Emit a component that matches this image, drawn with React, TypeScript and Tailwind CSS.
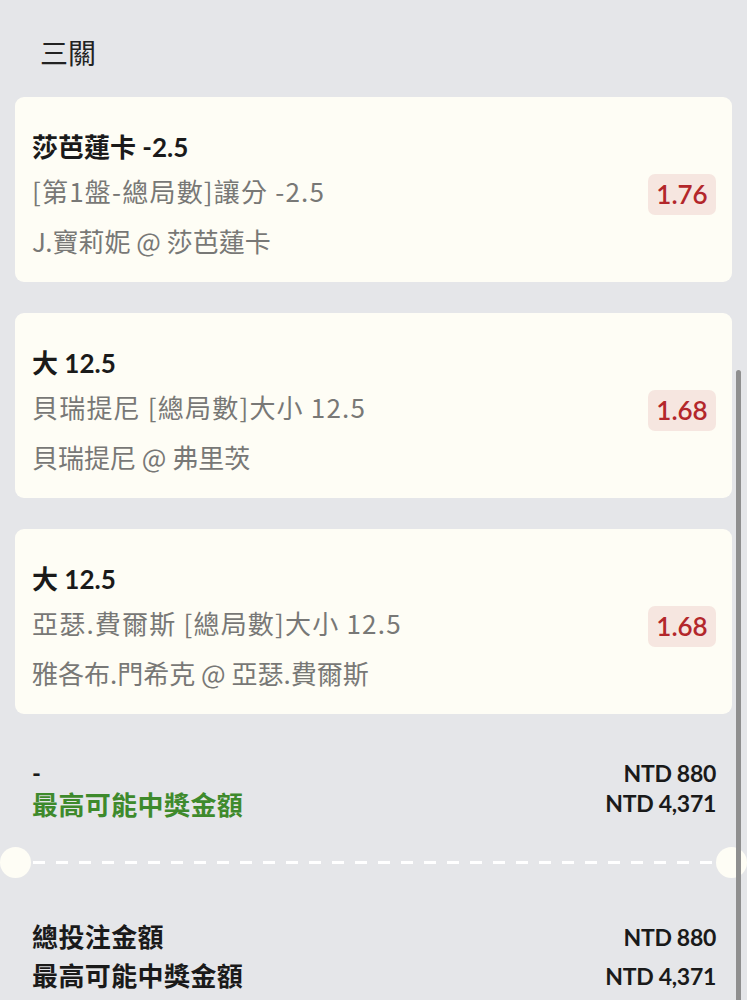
import React from 'react';

type Leg = {
  pick: string;
  market: string;
  match: string;
  odds: string;
};

const legs: Leg[] = [
  { pick: '莎芭蓮卡 -2.5', market: '[第1盤-總局數]讓分 -2.5', match: 'J.寶莉妮 @ 莎芭蓮卡', odds: '1.76' },
  { pick: '大 12.5', market: '貝瑞提尼 [總局數]大小 12.5', match: '貝瑞提尼 @ 弗里茨', odds: '1.68' },
  { pick: '大 12.5', market: '亞瑟.費爾斯 [總局數]大小 12.5', match: '雅各布.門希克 @ 亞瑟.費爾斯', odds: '1.68' },
];

const cjk = { fontFamily: '"Noto Sans CJK TC", sans-serif' };

const LegCard: React.FC<{ leg: Leg }> = ({ leg }) => (
  <div className="flex items-center justify-between rounded-[9px] bg-[#fefdf5] pl-[17px] pr-[16px] pt-[34px] pb-[25px]">
    <div>
      <div className="text-[26px] leading-[32px] font-bold text-[#1a1a1a]">{leg.pick}</div>
      <div className="mt-[12px] text-[26px] leading-[32px] tracking-[1.2px] text-[#787876]" style={cjk}>
        {leg.market}
      </div>
      <div className="mt-[18px] text-[26px] leading-[32px] text-[#787876]" style={cjk}>
        {leg.match}
      </div>
    </div>
    <div className="flex h-[41px] w-[68px] items-center justify-center rounded-[7px] bg-[#f6e6e0] text-[26px] font-semibold text-[#b3272b]">
      {leg.odds}
    </div>
  </div>
);

const App: React.FC = () => {
  return (
    <div
      className="relative h-[1000px] w-[747px] overflow-hidden bg-[#e5e6e9]"
      style={{ fontFamily: 'Lato, "Noto Sans CJK TC", sans-serif' }}
    >
      {/* Title */}
      <div className="pl-[40px] pt-[33px] text-[28px] leading-[38px] text-[#222222]" style={cjk}>
        三關
      </div>

      {/* Legs */}
      <div className="mt-[26px] flex flex-col gap-[31px] px-[15px]">
        {legs.map((leg, i) => (
          <LegCard key={i} leg={leg} />
        ))}
      </div>

      {/* Combo summary */}
      <div className="mt-[44px] flex justify-between pl-[32px] pr-[31px]">
        <div>
          <div className="text-[24px] leading-[30px] font-bold text-[#1a1a1a]">-</div>
          <div className="text-[26px] leading-[34px] font-bold tracking-[0.4px] text-[#3e8a2c]">最高可能中獎金額</div>
        </div>
        <div className="text-right text-[23px] font-bold tracking-[-0.3px] text-[#1a1a1a]">
          <div className="leading-[30px]">NTD 880</div>
          <div className="leading-[30px]">NTD 4,371</div>
        </div>
      </div>

      {/* Ticket divider */}
      <div className="mt-[25px] flex items-center">
        <div className="h-[31px] w-[31px] shrink-0 rounded-full bg-[#fefdf5]" />
        <div className="mx-[2px] h-[3px] flex-1 bg-[repeating-linear-gradient(90deg,#ffffff_0px,#ffffff_12px,transparent_12px,transparent_23px)]" />
        <div className="h-[31px] w-[31px] shrink-0 rounded-full bg-[#fefdf5]" />
      </div>

      {/* Totals */}
      <div className="mt-[40px] flex justify-between pl-[32px] pr-[31px] font-bold text-[#1a1a1a]">
        <div className="text-[26px] tracking-[0.4px]">
          <div className="leading-[39px]">總投注金額</div>
          <div className="leading-[39px]">最高可能中獎金額</div>
        </div>
        <div className="text-right text-[23px] tracking-[-0.3px]">
          <div className="leading-[39px]">NTD 880</div>
          <div className="leading-[39px]">NTD 4,371</div>
        </div>
      </div>

      {/* Scrollbar thumb */}
      <div className="absolute right-[6px] top-[370px] h-[640px] w-[5px] rounded-full bg-[#8f8f8f]" />
    </div>
  );
};

export default App;
